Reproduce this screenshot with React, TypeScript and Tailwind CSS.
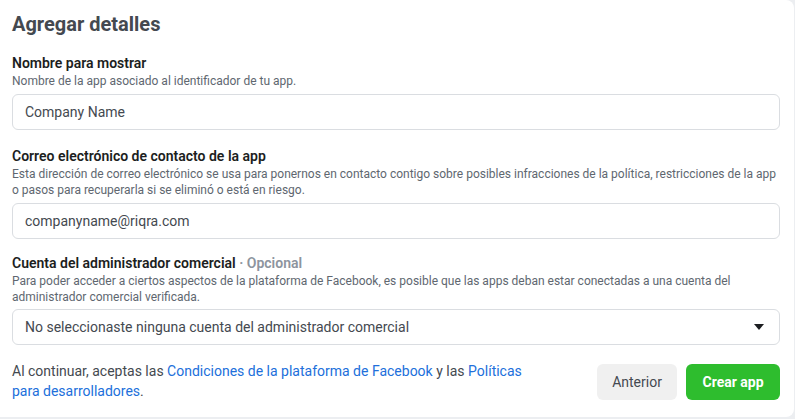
function Field({
  label,
  optional,
  help,
  children,
  className = '',
}: {
  label: string;
  optional?: boolean;
  help: React.ReactNode;
  children: React.ReactNode;
  className?: string;
}) {
  return (
    <div className={className}>
      <div className="text-[14px] leading-[18px] font-semibold text-[#1c1e21]">
        {label}
        {optional && <span className="text-[#8d949e]"> · Opcional</span>}
      </div>
      <p className="mt-px text-[12px] leading-[16px] text-[#606770]">{help}</p>
      {children}
    </div>
  );
}

export default function App() {
  return (
    <div className="w-[795px] h-[419px] bg-[#eceef1] overflow-hidden" style={{ fontFamily: 'Roboto, "Noto Sans", sans-serif' }}>
      <div className="w-[794px] h-[417px] bg-white rounded-br-lg rounded-tr-lg pl-3 pr-[14px] pt-3">
        <h1 className="text-[20px] leading-6 font-bold text-[#444950]">Agregar detalles</h1>

        <Field className="mt-[18px]" label="Nombre para mostrar" help="Nombre de la app asociado al identificador de tu app.">
          <div className="mt-[5px] h-9 rounded-md border border-[#dadde1] flex items-center px-3 text-[14px] text-[#444950]">
            Company Name
          </div>
        </Field>

        <Field
          className="mt-[17px]"
          label="Correo electrónico de contacto de la app"
          help="Esta dirección de correo electrónico se usa para ponernos en contacto contigo sobre posibles infracciones de la política, restricciones de la app o pasos para recuperarla si se eliminó o está en riesgo."
        >
          <div className="mt-[5px] h-9 rounded-md border border-[#dadde1] flex items-center px-3 text-[14px] text-[#444950]">
            companyname@riqra.com
          </div>
        </Field>

        <Field
          className="mt-[15px]"
          label="Cuenta del administrador comercial"
          optional
          help="Para poder acceder a ciertos aspectos de la plataforma de Facebook, es posible que las apps deban estar conectadas a una cuenta del administrador comercial verificada."
        >
          <div className="mt-1 h-9 rounded-md border border-[#dadde1] flex items-center justify-between pl-3 pr-[14px] text-[14px] text-[#444950]">
            <span>No seleccionaste ninguna cuenta del administrador comercial</span>
            <svg width="12" height="8" viewBox="0 0 12 8">
              <path d="M1 1h10L6 7z" fill="#1c1e21" />
            </svg>
          </div>
        </Field>

        <div className="mt-4 flex items-start justify-between">
          <p className="w-[520px] text-[14px] leading-5 text-[#444950]">
            Al continuar, aceptas las{' '}
            <a className="text-[#216fdb]">Condiciones de la plataforma de Facebook</a> y las{' '}
            <a className="text-[#216fdb]">Políticas para desarrolladores</a>.
          </p>
          <div className="mt-[3px] flex gap-[9px]">
            <button className="h-9 w-[80px] rounded-md bg-[#f0f0f0] text-[14px] text-[#444950]">Anterior</button>
            <button className="h-9 w-[94px] rounded-md bg-[#2ebd2e] text-[14px] font-bold text-white">Crear app</button>
          </div>
        </div>
      </div>
    </div>
  );
}
